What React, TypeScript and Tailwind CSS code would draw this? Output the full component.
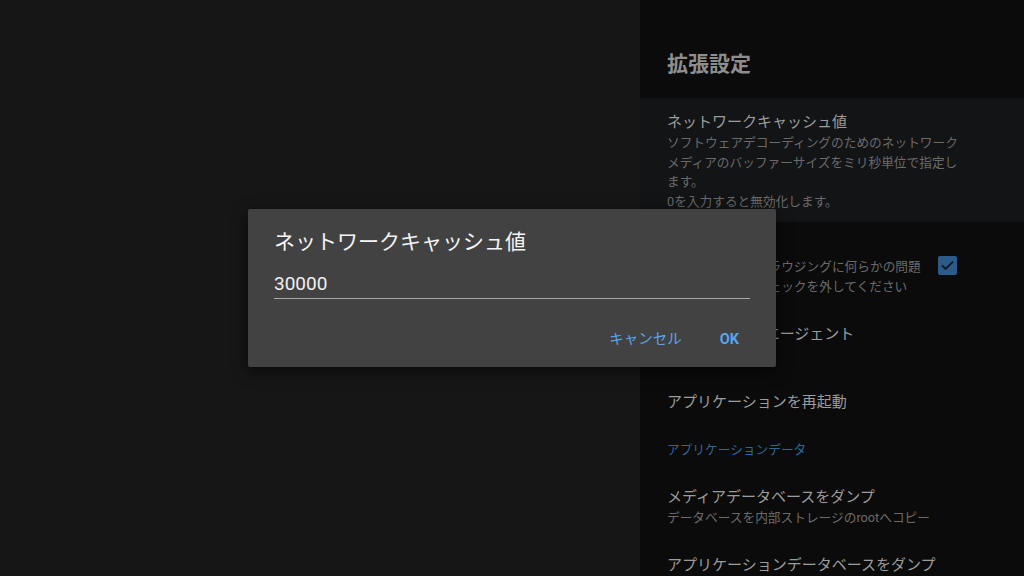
import React from 'react';

const font = { fontFamily: 'Roboto, "Noto Sans CJK JP", sans-serif' };

interface PrefItemProps {
  title: string;
  summary?: string[];
  className?: string;
  checked?: boolean;
}

const PrefItem: React.FC<PrefItemProps> = ({ title, summary, className = '', checked }) => (
  <div className={`flex items-start px-[27px] pt-[13px] pb-[13px] ${className}`}>
    <div className="flex-1">
      <p className="text-[15px] leading-[22px] text-[#9c9c9c] whitespace-nowrap">{title}</p>
      {summary?.map((line, i) => (
        <p key={i} className="text-[12.7px] leading-[20px] text-[#6a6a6a] whitespace-nowrap">
          {line}
        </p>
      ))}
    </div>
    {checked !== undefined && (
      <div className="mt-[21px] mr-[40px] w-[19px] h-[19px] rounded-[2px] bg-[#2c5b89] flex items-center justify-center">
        <svg width="15" height="15" viewBox="0 0 24 24" fill="none">
          <path d="M4 12.5l5 5L20 6.5" stroke="#0d1823" strokeWidth="3" strokeLinecap="round" strokeLinejoin="round" />
        </svg>
      </div>
    )}
  </div>
);

export default function App() {
  return (
    <div className="relative w-[1024px] h-[576px] overflow-hidden flex bg-[#161616]" style={font}>
      <div className="flex-1" />

      {/* Settings panel */}
      <div className="w-[384px] h-full bg-[#0b0b0b] overflow-hidden">
        <div className="h-[98px] flex items-center px-[27px] pt-[32px]">
          <h1 className="text-[21px] font-bold text-[#8e8e8e]">拡張設定</h1>
        </div>

        <div className="bg-[#131416] px-[27px] pt-[13px] pb-[11px]">
          <p className="text-[15px] leading-[22px] text-[#9c9c9c]">ネットワークキャッシュ値</p>
          <p className="text-[12.7px] leading-[19.5px] text-[#6a6a6a] whitespace-nowrap">ソフトウェアデコーディングのためのネットワーク</p>
          <p className="text-[12.7px] leading-[19.5px] text-[#6a6a6a] whitespace-nowrap">メディアのバッファーサイズをミリ秒単位で指定し</p>
          <p className="text-[12.7px] leading-[19.5px] text-[#6a6a6a]">ます。</p>
          <p className="text-[12.7px] leading-[19.5px] text-[#6a6a6a]">0を入力すると無効化します。</p>
        </div>

        <PrefItem
          title="ブラウジング"
          summary={['ネットワークのブラウジングに何らかの問題', 'がある場合は、チェックを外してください']}
          checked
        />
        <PrefItem title="HTTPユーザーエージェント" summary={['VLC/3.0']} />
        <PrefItem title="アプリケーションを再起動" />

        <div className="px-[27px] pt-[14px] pb-[13px]">
          <p className="text-[12.7px] leading-[20px] text-[#2e6799]">アプリケーションデータ</p>
        </div>

        <PrefItem title="メディアデータベースをダンプ" summary={['データベースを内部ストレージのrootへコピー']} />
        <PrefItem title="アプリケーションデータベースをダンプ" />
      </div>

      {/* Dialog */}
      <div className="absolute left-[248px] top-[209px] w-[528px] h-[158px] bg-[#424242] rounded-[2px] shadow-[0_4px_16px_rgba(0,0,0,0.6)] px-[26px] pt-[19px]">
        <h2 className="text-[21px] leading-[28px] text-[#f4f4f4]">ネットワークキャッシュ値</h2>
        <div className="mt-[15px] border-b-[1.5px] border-[#a9a9a9] pb-[1px]">
          <p className="text-[19px] leading-[26px] text-[#f0f0f0]">30000</p>
        </div>
        <div className="flex justify-end items-center gap-[38px] mt-[30px] pr-[11px]">
          <span className="text-[14.5px] text-[#56a6ee]">キャンセル</span>
          <span className="text-[14.5px] font-bold text-[#56a6ee]">OK</span>
        </div>
      </div>
    </div>
  );
}
